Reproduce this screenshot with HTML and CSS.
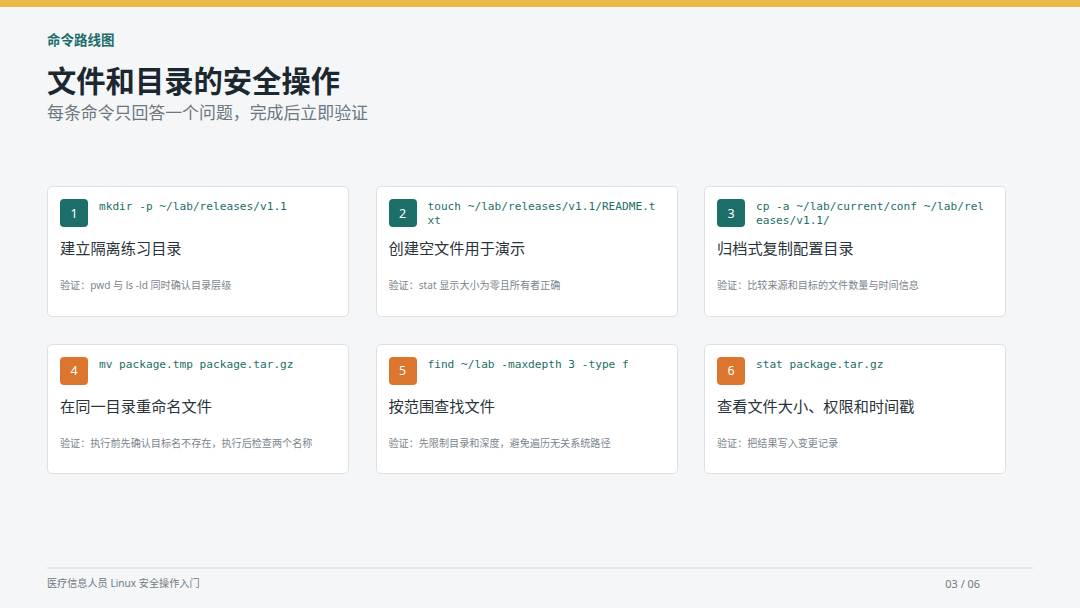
FILE: index.html
```html
<!DOCTYPE html>
<html lang="zh">
<head>
    <meta charset="UTF-8">
    <title>命令路线图</title>
    <link rel="stylesheet" href="styles.css">
</head>
<body>
    <div class="topbar"></div>
    <div class="slide">
        <div class="eyebrow">命令路线图</div>
        <h1>文件和目录的安全操作</h1>
        <p class="subtitle">每条命令只回答一个问题，完成后立即验证</p>
        <div class="cards">
            <div class="card">
                <div class="card-head">
                    <div class="badge teal">1</div>
                    <code>mkdir -p ~/lab/releases/v1.1</code>
                </div>
                <h3>建立隔离练习目录</h3>
                <p class="check">验证：pwd 与 ls -ld 同时确认目录层级</p>
            </div>
            <div class="card">
                <div class="card-head">
                    <div class="badge teal">2</div>
                    <code>touch ~/lab/releases/v1.1/README.txt</code>
                </div>
                <h3>创建空文件用于演示</h3>
                <p class="check">验证：stat 显示大小为零且所有者正确</p>
            </div>
            <div class="card">
                <div class="card-head">
                    <div class="badge teal">3</div>
                    <code>cp -a ~/lab/current/conf ~/lab/releases/v1.1/</code>
                </div>
                <h3>归档式复制配置目录</h3>
                <p class="check">验证：比较来源和目标的文件数量与时间信息</p>
            </div>
            <div class="card">
                <div class="card-head">
                    <div class="badge orange">4</div>
                    <code>mv package.tmp package.tar.gz</code>
                </div>
                <h3>在同一目录重命名文件</h3>
                <p class="check">验证：执行前先确认目标名不存在，执行后检查两个名称</p>
            </div>
            <div class="card">
                <div class="card-head">
                    <div class="badge orange">5</div>
                    <code>find ~/lab -maxdepth 3 -type f</code>
                </div>
                <h3>按范围查找文件</h3>
                <p class="check">验证：先限制目录和深度，避免遍历无关系统路径</p>
            </div>
            <div class="card">
                <div class="card-head">
                    <div class="badge orange">6</div>
                    <code>stat package.tar.gz</code>
                </div>
                <h3>查看文件大小、权限和时间戳</h3>
                <p class="check">验证：把结果写入变更记录</p>
            </div>
        </div>
        <div class="footer">
            <span>医疗信息人员 Linux 安全操作入门</span>
            <span class="page-num">03 / 06</span>
        </div>
    </div>
</body>
</html>
```

FILE: styles.css
```css
html, body {
    margin: 0;
    padding: 0;
}
body {
    width: 1080px;
    height: 608px;
    overflow: hidden;
    background-color: #f4f6f8;
    font-family: "Noto Sans", "Noto Sans CJK SC", sans-serif;
    color: #1f2a30;
}
.topbar {
    height: 7px;
    background-color: #e9b949;
}
.slide {
    box-sizing: border-box;
    height: 601px;
    display: flex;
    flex-direction: column;
    padding: 24px 47px 17px 47px;
}
.eyebrow {
    font-size: 13.5px;
    line-height: 18px;
    font-weight: 700;
    color: #1c6e68;
}
h1 {
    margin: 13px 0 0 0;
    font-size: 29.3px;
    line-height: 39px;
    font-weight: 700;
    color: #1c2830;
}
.subtitle {
    margin: 0;
    font-size: 16.9px;
    line-height: 24px;
    color: #6c7780;
}
.cards {
    display: grid;
    grid-template-columns: repeat(3, 302px);
    grid-auto-rows: 130.5px;
    column-gap: 26.5px;
    row-gap: 27px;
    margin-top: 61px;
}
.card {
    box-sizing: border-box;
    padding: 12px 12px 0 12px;
    background-color: #ffffff;
    border: 1px solid #dde1e5;
    border-radius: 5px;
}
.card-head {
    display: flex;
    gap: 11px;
    height: 28px;
}
.badge {
    flex: none;
    width: 28px;
    height: 28px;
    border-radius: 4px;
    display: flex;
    align-items: center;
    justify-content: center;
    font-size: 12.5px;
    color: #ffffff;
}
.teal {
    background-color: #1c6e68;
}
.orange {
    background-color: #dc762e;
}
code {
    display: block;
    min-width: 0;
    padding: 1px 5px 0 0;
    word-break: break-all;
    font-family: "DejaVu Sans Mono", monospace;
    font-size: 11.15px;
    line-height: 13.5px;
    color: #1c6e68;
}
h3 {
    margin: 10px 0 0 0;
    font-size: 15.2px;
    line-height: 22px;
    font-weight: 400;
    color: #28333a;
}
.check {
    margin: 19px 0 0 0;
    font-size: 10.1px;
    line-height: 15px;
    color: #7b858d;
}
.footer {
    display: flex;
    justify-content: space-between;
    width: 933px;
    margin-top: auto;
    padding: 7px 53px 0 0;
    border-top: 2px solid #e3e6e9;
    font-size: 10.15px;
    line-height: 15px;
    color: #6f7a82;
}
.page-num {
    font-size: 10.9px;
}
```
